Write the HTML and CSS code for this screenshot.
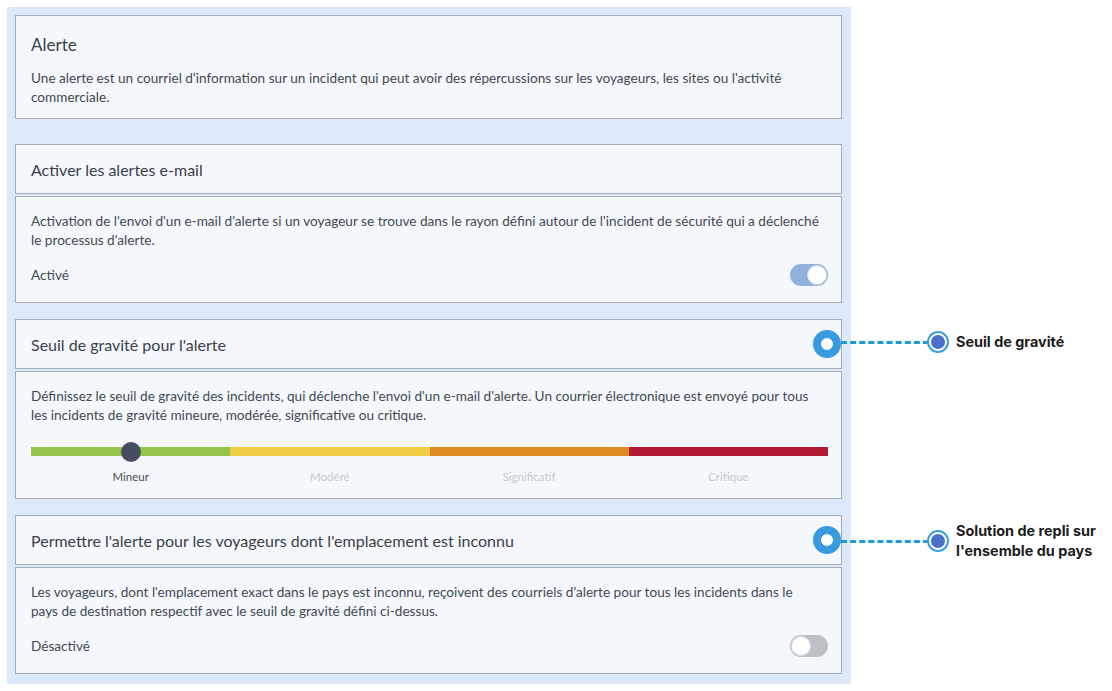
FILE: index.html
```html
<!DOCTYPE html>
<html lang="fr">
<head>
<meta charset="utf-8">
<link rel="stylesheet" href="styles.css">
</head>
<body>
<div class="page">
  <div class="panel">
    <section class="card intro">
      <h1 class="intro-title">Alerte</h1>
      <p class="text">Une alerte est un courriel d'information sur un incident qui peut avoir des répercussions sur les voyageurs, les sites ou l'activité commerciale.</p>
    </section>

    <section class="group first">
      <div class="card head"><h2 class="head-title">Activer les alertes e-mail</h2></div>
      <div class="card body">
        <p class="text">Activation de l'envoi d'un e-mail d'alerte si un voyageur se trouve dans le rayon défini autour de l'incident de sécurité qui a déclenché le processus d'alerte.</p>
        <div class="row">
          <span class="state">Activé</span>
          <span class="toggle on"><span class="knob"></span></span>
        </div>
      </div>
    </section>

    <section class="group">
      <div class="card head">
        <h2 class="head-title">Seuil de gravité pour l'alerte</h2>
        <span class="marker"></span>
      </div>
      <div class="card body">
        <p class="text">Définissez le seuil de gravité des incidents, qui déclenche l'envoi d'un e-mail d'alerte. Un courrier électronique est envoyé pour tous les incidents de gravité mineure, modérée, significative ou critique.</p>
        <div class="scale">
          <div class="seg green"><span class="thumb"></span></div>
          <div class="seg yellow"></div>
          <div class="seg orange"></div>
          <div class="seg red"></div>
        </div>
        <div class="labels">
          <span class="lbl active">Mineur</span>
          <span class="lbl">Modéré</span>
          <span class="lbl">Significatif</span>
          <span class="lbl">Critique</span>
        </div>
      </div>
    </section>

    <section class="group">
      <div class="card head">
        <h2 class="head-title">Permettre l'alerte pour les voyageurs dont l'emplacement est inconnu</h2>
        <span class="marker"></span>
      </div>
      <div class="card body">
        <p class="text narrow">Les voyageurs, dont l'emplacement exact dans le pays est inconnu, reçoivent des courriels d'alerte pour tous les incidents dans le pays de destination respectif avec le seuil de gravité défini ci-dessus.</p>
        <div class="row">
          <span class="state">Désactivé</span>
          <span class="toggle off"><span class="knob"></span></span>
        </div>
      </div>
    </section>
  </div>

  <div class="callout c1">
    <span class="line"></span>
    <span class="dot"></span>
    <span class="note">Seuil de gravité</span>
  </div>
  <div class="callout c2">
    <span class="line"></span>
    <span class="dot"></span>
    <span class="note">Solution de repli sur<br>l'ensemble du pays</span>
  </div>
</div>
</body>
</html>
```

FILE: styles.css
```css
* { box-sizing: border-box; }
html, body { margin: 0; padding: 0; background: #ffffff; }
body { font-family: "Lato", "Open Sans", sans-serif; color: #454b54; }

.page { position: relative; width: 1112px; height: 691px; padding: 7px 0 0 7px; }

.panel {
  width: 844px;
  background: #dde9f8;
  padding: 8px 9px 10px 8px;
}

.card {
  background: #f4f8fd;
  border: 1px solid #a7adb6;
  position: relative;
}

.intro { height: 104px; padding: 18px 15px 0 15px; }
.intro-title { margin: 0; font-size: 17px; font-weight: 400; color: #3b4049; line-height: 22px; }
.intro .text { margin-top: 13px; }

.text { margin: 0; font-size: 13.6px; line-height: 19px; color: #434951; }
.text.narrow { max-width: 768px; }

.group { margin-top: 16px; display: flex; flex-direction: column; gap: 2px; }
.group.first { margin-top: 25px; }

.head { height: 50px; padding: 0 15px; display: flex; align-items: center; }
.head-title { margin: 0; font-size: 16px; font-weight: 400; color: #3b4049; }

.body { padding: 15px 13px 0 15px; }
.group.first .body { height: 107px; }
.group:nth-of-type(3) .body { height: 128px; }
.group:nth-of-type(4) .body { height: 107px; }

.row { display: flex; justify-content: space-between; align-items: center; margin-top: 14px; }
.state { font-size: 13.6px; color: #434951; }

.toggle { width: 38px; height: 22px; border-radius: 11px; position: relative; display: block; }
.toggle.on { background: #8fb1db; }
.toggle.off { background: #bdc1c6; }
.knob { position: absolute; top: 1px; width: 20px; height: 20px; border-radius: 50%; background: #fff; border: 1px solid #d8dde3; }
.toggle.on .knob { right: 1px; }
.toggle.off .knob { left: 1px; }

.scale { display: flex; height: 9px; margin-top: 22px; }
.seg { flex: 1; position: relative; }
.green { background: #94c449; }
.yellow { background: #efcd45; }
.orange { background: #dd8c24; }
.red { background: #b21b33; }
.thumb { position: absolute; left: 50%; top: 50%; width: 20px; height: 20px; margin: -10px 0 0 -10px; border-radius: 50%; background: #474d60; }

.labels { display: flex; margin-top: 14px; }
.lbl { flex: 1; text-align: center; font-size: 11.5px; color: #c4c8cd; }
.lbl.active { color: #454b54; }

.marker {
  position: absolute; right: 0; top: 50%;
  width: 28px; height: 28px; margin-top: -14px;
  border-radius: 50%; background: #ffffff; border: 8px solid #399ae0;
}

.callout { position: absolute; left: 841px; display: flex; align-items: center; }
.c1 { top: 332px; }
.c2 { top: 521px; }
.line { width: 88px; height: 0; border-top: 3px dashed #1d9bd8; }
.dot { width: 18px; height: 18px; border-radius: 50%; background: #4a6fc9; border: 2px solid #fff; box-shadow: 0 0 0 2px #3d9ee0; }
.note { margin-left: 9px; font-family: "Inter", "Liberation Sans", sans-serif; font-weight: 700; font-size: 14.4px; line-height: 20px; color: #1c1c1c; }
```
